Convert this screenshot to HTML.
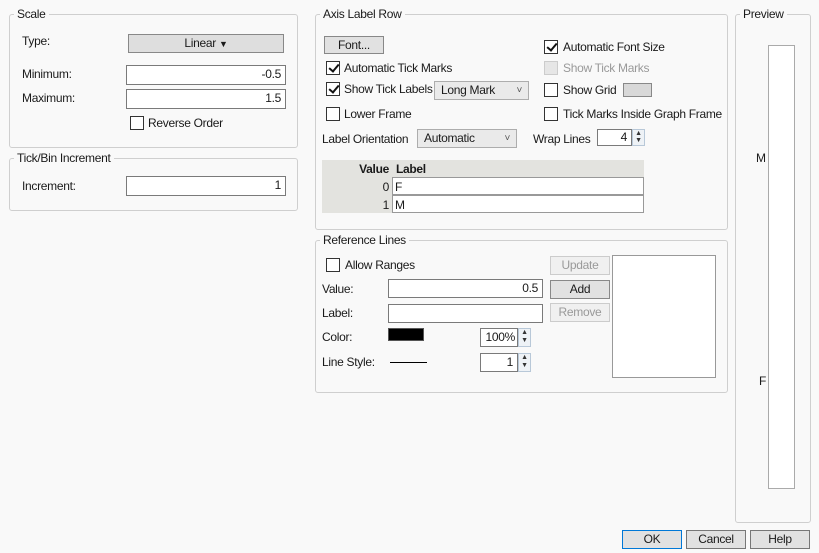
<!DOCTYPE html>
<html><head><style>
*{box-sizing:border-box;margin:0;padding:0}
body{width:819px;height:553px;background:#f9f9f9;font-family:"Liberation Sans",sans-serif;font-size:12px;letter-spacing:-0.3px;color:#1a1a1a;position:relative;overflow:hidden}
.a{position:absolute}
.g{position:absolute;border:1px solid #cfcfcf;border-radius:3px}
.lg{position:absolute;background:#f9f9f9;padding:0 3px;font-size:12px;line-height:14px}
.in{position:absolute;background:#fff;border:1px solid #7a7a7a;text-align:right;padding-right:4px;line-height:17px}
.btn{position:absolute;background:#e1e1e1;border:1px solid #adadad;text-align:center;line-height:16px}
.cb{position:absolute;width:14px;height:14px;border:1px solid #333;background:#fff}
.cb.on::after{content:"";position:absolute;left:4px;top:0px;width:4px;height:8px;border:solid #111;border-width:0 2px 2px 0;transform:rotate(40deg)}
.t{position:absolute;line-height:14px;white-space:nowrap}
.sel{position:absolute;background:#eaeaea;border:1px solid #adadad;padding-left:6px;line-height:17px}
.sel::after{content:"˅";position:absolute;right:6px;top:0px;font-size:10px;color:#555}
.sp{position:absolute;width:13px;border:1px solid #b8c8d8;background:#eef2f6;font-size:7px;text-align:center;line-height:7px;color:#333}
</style></head><body>
<div class="g" style="left:9px;top:14px;width:289px;height:134px"></div>
<div class="lg" style="left:14px;top:7px">Scale</div>
<div class="t" style="left:22px;top:34px">Type:</div>
<div class="btn" style="left:128px;top:34px;width:156px;height:19px;background:#dedede;border-color:#888">Linear <span style="font-size:9px">▼</span></div>
<div class="t" style="left:22px;top:67px">Minimum:</div>
<div class="in" style="left:126px;top:65px;width:160px;height:20px">-0.5</div>
<div class="t" style="left:22px;top:91px">Maximum:</div>
<div class="in" style="left:126px;top:89px;width:160px;height:20px">1.5</div>
<div class="cb" style="left:130px;top:116px"></div>
<div class="t" style="left:148px;top:116px">Reverse Order</div>
<div class="g" style="left:9px;top:158px;width:289px;height:53px"></div>
<div class="lg" style="left:14px;top:151px">Tick/Bin Increment</div>
<div class="t" style="left:22px;top:179px">Increment:</div>
<div class="in" style="left:126px;top:176px;width:160px;height:20px">1</div>
<div class="g" style="left:315px;top:14px;width:413px;height:216px"></div>
<div class="lg" style="left:320px;top:7px">Axis Label Row</div>
<div class="btn" style="left:324px;top:36px;width:60px;height:18px;border-color:#888">Font...</div>
<div class="cb on" style="left:326px;top:61px"></div><div class="t" style="left:344px;top:61px">Automatic Tick Marks</div>
<div class="cb on" style="left:326px;top:82px"></div><div class="t" style="left:344px;top:82px">Show Tick Labels</div>
<div class="sel" style="left:434px;top:81px;width:95px;height:19px">Long Mark</div>
<div class="cb" style="left:326px;top:107px"></div><div class="t" style="left:344px;top:107px">Lower Frame</div>
<div class="cb on" style="left:544px;top:40px"></div><div class="t" style="left:563px;top:40px">Automatic Font Size</div>
<div class="cb" style="left:544px;top:61px;background:#e6e6e6;border-color:#ccc"></div><div class="t" style="left:563px;top:61px;color:#999">Show Tick Marks</div>
<div class="cb" style="left:544px;top:83px"></div><div class="t" style="left:563px;top:83px">Show Grid</div>
<div class="a" style="left:623px;top:83px;width:29px;height:14px;background:#d8d8d8;border:1px solid #888"></div>
<div class="cb" style="left:544px;top:107px"></div><div class="t" style="left:563px;top:107px">Tick Marks Inside Graph Frame</div>
<div class="t" style="left:322px;top:132px">Label Orientation</div>
<div class="sel" style="left:417px;top:129px;width:100px;height:19px">Automatic</div>
<div class="t" style="left:533px;top:132px">Wrap Lines</div>
<div class="in" style="left:597px;top:129px;width:35px;height:17px;line-height:14px">4</div>
<div class="sp" style="left:632px;top:129px;height:17px">▲<br>▼</div>
<div class="a" style="left:322px;top:160px;width:322px;height:53px;background:#e3e3df"></div>
<div class="t" style="left:322px;top:162px;width:67px;text-align:right;font-weight:bold">Value</div>
<div class="t" style="left:396px;top:162px;font-weight:bold">Label</div>
<div class="a" style="left:392px;top:177px;width:252px;height:18px;background:#fff;border:1px solid #999"></div>
<div class="a" style="left:392px;top:195px;width:252px;height:18px;background:#fff;border:1px solid #999"></div>
<div class="t" style="left:322px;top:180px;width:67px;text-align:right">0</div>
<div class="t" style="left:395px;top:180px">F</div>
<div class="t" style="left:322px;top:198px;width:67px;text-align:right">1</div>
<div class="t" style="left:395px;top:198px">M</div>
<div class="g" style="left:315px;top:240px;width:413px;height:153px"></div>
<div class="lg" style="left:320px;top:233px">Reference Lines</div>
<div class="cb" style="left:326px;top:258px"></div><div class="t" style="left:345px;top:258px">Allow Ranges</div>
<div class="t" style="left:322px;top:282px">Value:</div>
<div class="in" style="left:388px;top:279px;width:155px;height:19px">0.5</div>
<div class="t" style="left:322px;top:306px">Label:</div>
<div class="in" style="left:388px;top:304px;width:155px;height:19px"></div>
<div class="t" style="left:322px;top:330px">Color:</div>
<div class="a" style="left:388px;top:328px;width:36px;height:13px;background:#000;border:1px solid #555"></div>
<div class="in" style="left:480px;top:328px;width:38px;height:19px;padding-right:2px">100%</div>
<div class="sp" style="left:518px;top:328px;height:19px;line-height:8px">▲<br>▼</div>
<div class="t" style="left:322px;top:355px">Line Style:</div>
<div class="a" style="left:390px;top:362px;width:37px;height:1px;background:#000"></div>
<div class="in" style="left:480px;top:353px;width:38px;height:19px">1</div>
<div class="sp" style="left:518px;top:353px;height:19px;line-height:8px">▲<br>▼</div>
<div class="btn" style="left:550px;top:256px;width:60px;height:19px;background:#f0f0f0;border-color:#ccc;color:#999">Update</div>
<div class="btn" style="left:550px;top:280px;width:60px;height:19px;border-color:#888">Add</div>
<div class="btn" style="left:550px;top:303px;width:60px;height:19px;background:#f0f0f0;border-color:#ccc;color:#999">Remove</div>
<div class="a" style="left:612px;top:255px;width:104px;height:123px;background:#fff;border:1px solid #999"></div>
<div class="g" style="left:735px;top:14px;width:76px;height:509px"></div>
<div class="lg" style="left:740px;top:7px">Preview</div>
<div class="a" style="left:768px;top:45px;width:27px;height:444px;background:#fff;border:1px solid #aaa"></div>
<div class="t" style="left:756px;top:151px">M</div>
<div class="t" style="left:759px;top:374px">F</div>
<div class="btn" style="left:622px;top:530px;width:60px;height:19px;border-color:#0078d7">OK</div>
<div class="btn" style="left:686px;top:530px;width:60px;height:19px;border-color:#777">Cancel</div>
<div class="btn" style="left:750px;top:530px;width:60px;height:19px;border-color:#777">Help</div>
</body></html>
